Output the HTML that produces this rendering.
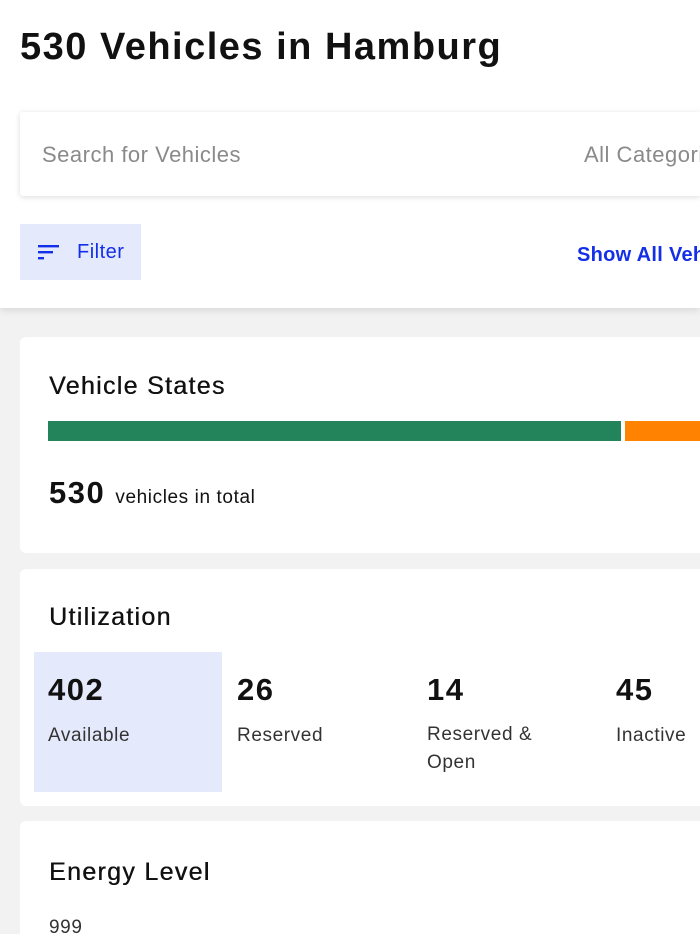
<!DOCTYPE html>
<html><head><style>
*{margin:0;padding:0;box-sizing:border-box}
html,body{width:700px;height:934px;overflow:hidden}
body{background:#fff;font-family:"Liberation Sans",sans-serif;color:#111;position:relative}
#w{position:absolute;left:0;top:0;width:700px;height:934px;overflow:hidden}
.abs{position:absolute}
.hdr{left:0;top:0;width:700px;height:308px;background:#fff;box-shadow:0 2px 8px rgba(0,0,0,.12);z-index:2;overflow:hidden}
.gray{left:0;top:308px;width:700px;height:626px;background:#f2f2f2}
.card{background:#fff;left:20px;width:680px;border-radius:6px 0 0 6px;overflow:hidden}
.t{white-space:nowrap}
.h{font-size:25px;letter-spacing:1.3px;font-weight:normal;text-shadow:0.4px 0 0 #111}
.n{font-size:31px;font-weight:bold;letter-spacing:1.5px}
.l{font-size:19px;color:#333;letter-spacing:.6px}
</style></head><body><div id="w">
<div class="abs hdr">
 <div class="abs t" style="left:20px;top:26px;font-size:38px;font-weight:bold;letter-spacing:1.5px">530 Vehicles in Hamburg</div>
 <div class="abs" style="left:20px;top:112px;width:680px;height:84px;background:#fff;box-shadow:0 1px 6px rgba(0,0,0,.15);border-radius:3px 0 0 3px"></div>
 <div class="abs t" style="left:42px;top:142px;font-size:22px;color:#8a8a8a;letter-spacing:.5px">Search for Vehicles</div>
 <div class="abs t" style="left:584px;top:142px;font-size:22px;color:#8a8a8a;letter-spacing:.5px">All Categories</div>
 <div class="abs" style="left:20px;top:224px;width:121px;height:56px;background:#e5e9fc"></div>
 <svg class="abs" style="left:38px;top:244px" width="22" height="16"><rect x="0" y="1" width="21" height="2.4" fill="#1330e8"/><rect x="0" y="7" width="15" height="2.4" fill="#1330e8"/><rect x="0" y="13" width="6" height="2.4" fill="#1330e8"/></svg>
 <div class="abs t" style="left:77px;top:241px;font-size:20px;color:#1330e8;letter-spacing:.5px">Filter</div>
 <div class="abs t" style="left:577px;top:244px;font-size:20px;font-weight:bold;color:#1330e8;letter-spacing:.3px">Show All Vehicles</div>
</div>
<div class="abs gray"></div>
<div class="abs card" style="top:337px;height:216px">
 <div class="abs t h" style="left:29px;top:35px">Vehicle States</div>
 <div class="abs" style="left:28px;top:84px;width:573px;height:20px;background:#23835a"></div>
 <div class="abs" style="left:605px;top:84px;width:75px;height:20px;background:#ff8200"></div>
 <div class="abs t n" style="left:29px;top:138px">530 <span style="font-size:19px;font-weight:normal;letter-spacing:.6px">vehicles in total</span></div>
</div>
<div class="abs card" style="top:569px;height:237px">
 <div class="abs t h" style="left:29px;top:34px">Utilization</div>
 <div class="abs" style="left:14px;top:83px;width:188px;height:140px;background:#e5e9fc"></div>
 <div class="abs t n" style="left:28px;top:103px">402</div>
 <div class="abs t l" style="left:28px;top:156px">Available</div>
 <div class="abs t n" style="left:217px;top:103px">26</div>
 <div class="abs t l" style="left:217px;top:156px">Reserved</div>
 <div class="abs t n" style="left:407px;top:103px">14</div>
 <div class="abs l" style="left:407px;top:152px;line-height:28px;white-space:nowrap">Reserved &amp;<br>Open</div>
 <div class="abs t n" style="left:596px;top:103px">45</div>
 <div class="abs t l" style="left:596px;top:156px">Inactive</div>
</div>
<div class="abs card" style="top:821px;height:113px;border-radius:6px 0 0 0">
 <div class="abs t h" style="left:29px;top:37px">Energy Level</div>
 <div class="abs t l" style="left:29px;top:96px">999</div>
</div>
</div></body></html>
